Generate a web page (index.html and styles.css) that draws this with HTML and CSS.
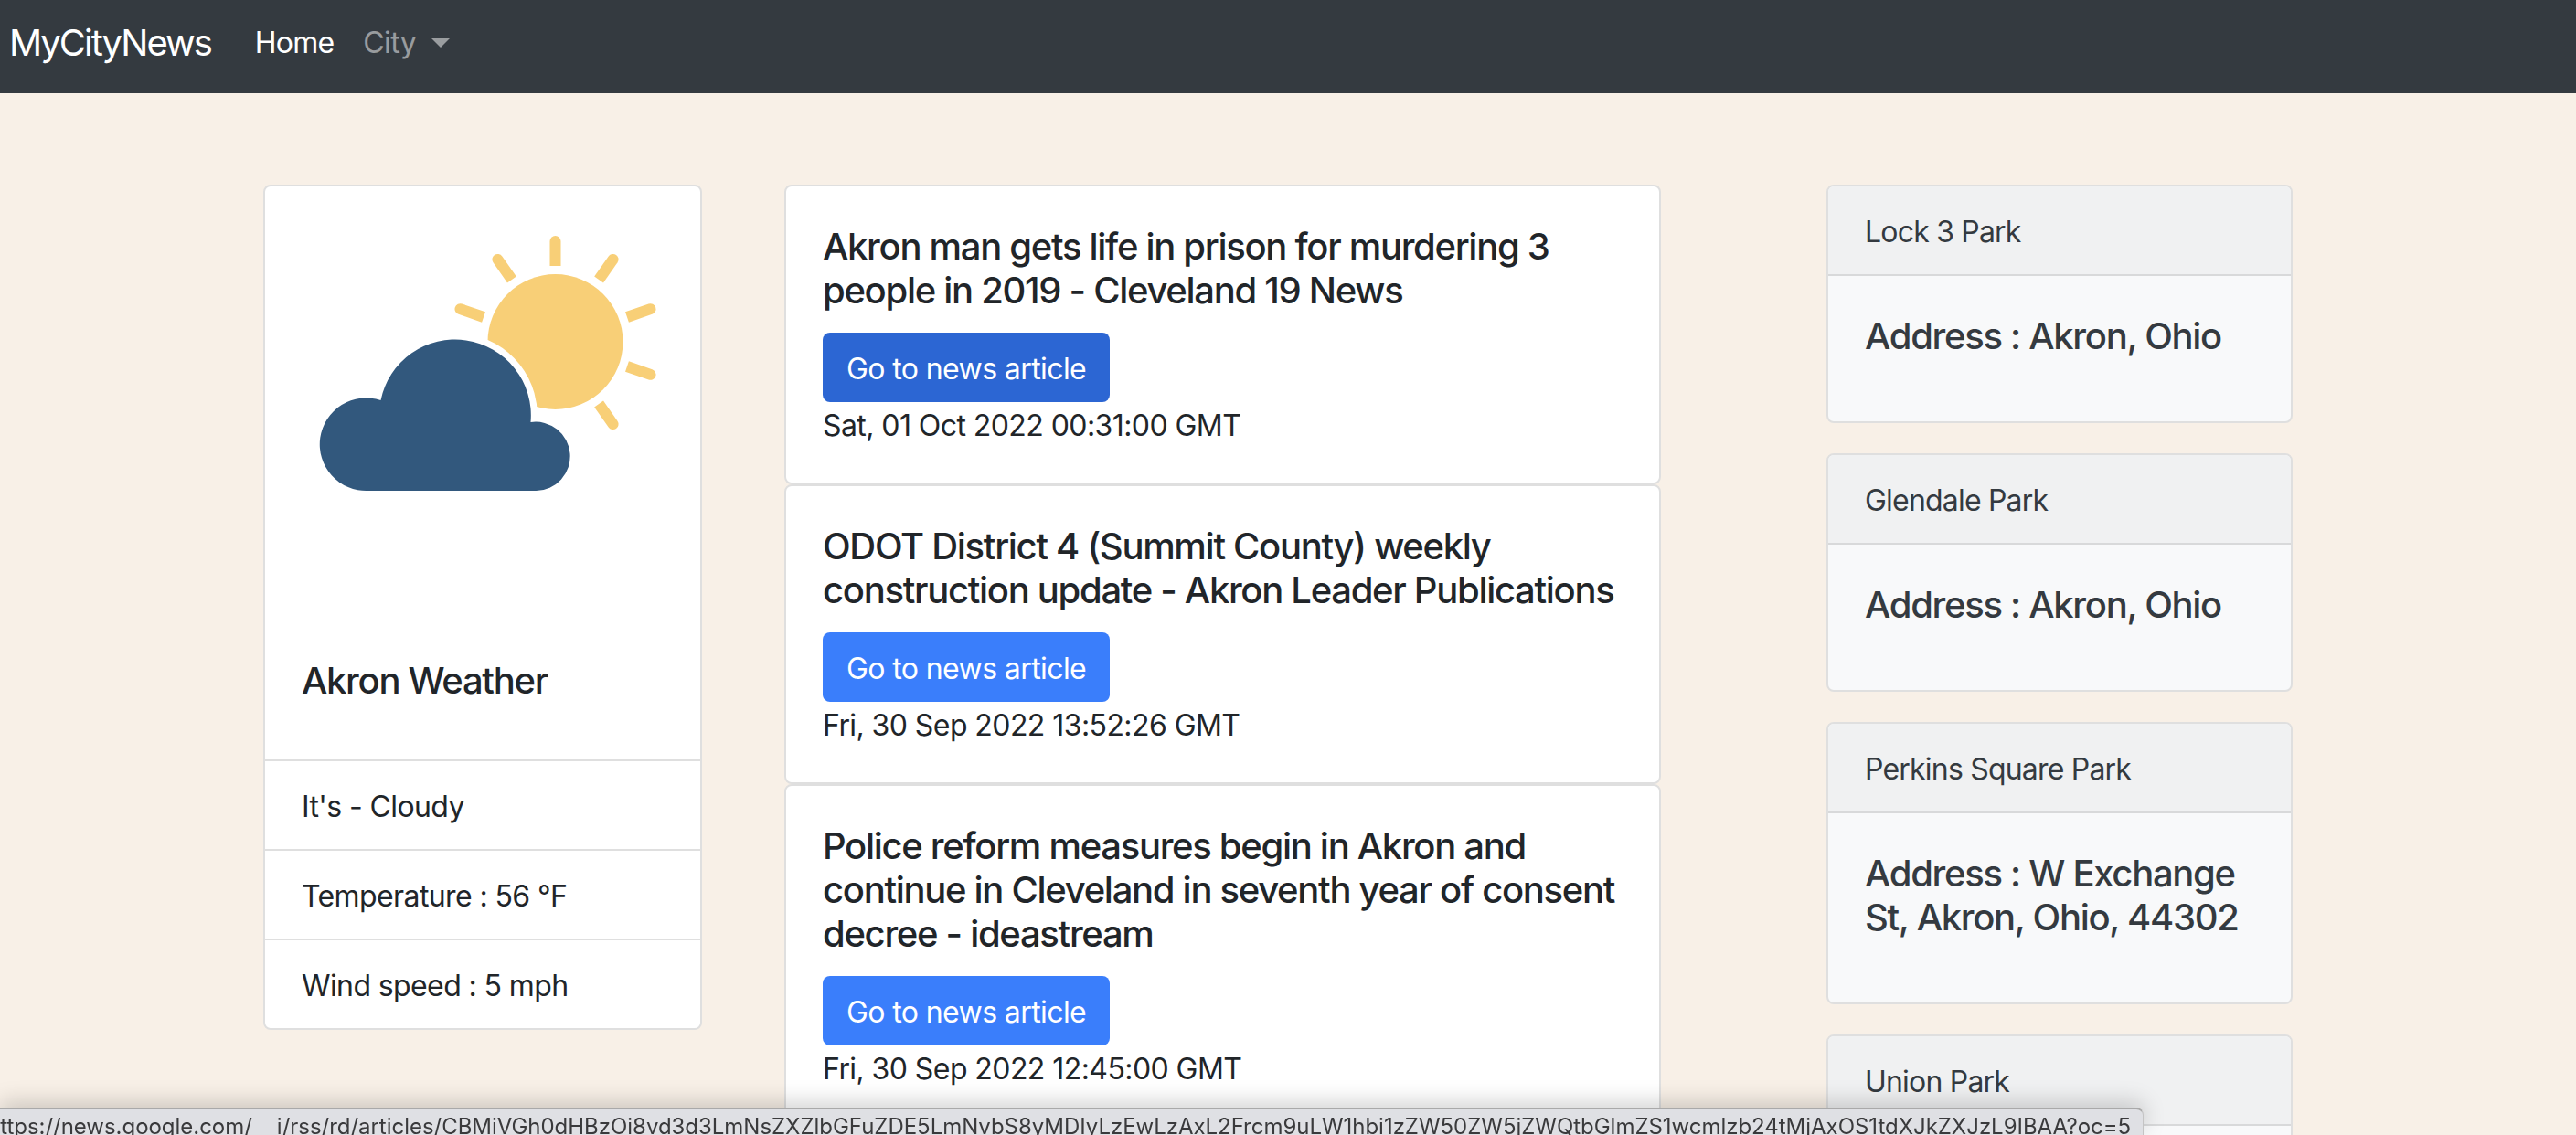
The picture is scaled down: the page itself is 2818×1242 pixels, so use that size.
FILE: index.html
```html
<!DOCTYPE html>
<html lang="en">
<head>
    <meta charset="UTF-8">
    <meta name="viewport" content="width=device-width, initial-scale=1.0">
    <title>MyCityNews</title>
    <link rel="stylesheet" href="styles.css">
</head>
<body>

<nav class="navbar">
    <a class="brand" href="#">MyCityNews</a>
    <a class="nav-link active" href="#">Home</a>
    <a class="nav-link" href="#">City <span class="caret"></span></a>
</nav>

<div class="page">
    <div class="weather-col">
        <div class="card">
            <svg class="weather-img" viewBox="290 205 475 475">
                <defs>
                    <path id="ray" d="M601 292V265A6 6 0 0 1 613 265V292Z"/>
                </defs>
                <circle cx="607" cy="375" r="74" fill="#f8cf77"/>
                <g fill="#f8cf77">
                    <use href="#ray"/>
                    <use href="#ray" transform="rotate(-35 607 375)"/>
                    <use href="#ray" transform="rotate(35 607 375)"/>
                    <use href="#ray" transform="rotate(-71 607 375)"/>
                    <use href="#ray" transform="rotate(71 607 375)"/>
                    <use href="#ray" transform="rotate(109 607 375)"/>
                    <use href="#ray" transform="rotate(145 607 375)"/>
                </g>
                <path class="cloud" d="M402 538A50.8 50.8 0 1 1 416 439A83 83 0 0 1 580 463A37.7 37.7 0 1 1 586 538Z"/>
            </svg>
            <div class="card-body">
                <h5 class="card-title">Akron Weather</h5>
            </div>
            <ul class="list-group">
                <li>It's - Cloudy</li>
                <li>Temperature : 56 °F</li>
                <li>Wind speed : 5 mph</li>
            </ul>
        </div>
    </div>

    <div class="news-col">
        <div class="card">
            <div class="card-body">
                <h5 class="card-title">Akron man gets life in prison for murdering 3 people in 2019 - Cleveland 19 News</h5>
                <a class="btn btn-hover" href="#">Go to news article</a>
                <div class="news-date">Sat, 01 Oct 2022 00:31:00 GMT</div>
            </div>
        </div>
        <div class="card">
            <div class="card-body">
                <h5 class="card-title">ODOT District 4 (Summit County) weekly construction update - Akron Leader Publications</h5>
                <a class="btn" href="#">Go to news article</a>
                <div class="news-date">Fri, 30 Sep 2022 13:52:26 GMT</div>
            </div>
        </div>
        <div class="card">
            <div class="card-body">
                <h5 class="card-title">Police reform measures begin in Akron and continue in Cleveland in seventh year of consent decree - ideastream</h5>
                <a class="btn" href="#">Go to news article</a>
                <div class="news-date">Fri, 30 Sep 2022 12:45:00 GMT</div>
            </div>
        </div>
    </div>

    <div class="parks-col">
        <div class="park">
            <div class="park-header">Lock 3 Park</div>
            <div class="park-body"><h5>Address : Akron, Ohio</h5></div>
        </div>
        <div class="park">
            <div class="park-header">Glendale Park</div>
            <div class="park-body"><h5>Address : Akron, Ohio</h5></div>
        </div>
        <div class="park">
            <div class="park-header">Perkins Square Park</div>
            <div class="park-body"><h5>Address : W Exchange St, Akron, Ohio, 44302</h5></div>
        </div>
        <div class="park">
            <div class="park-header">Union Park</div>
            <div class="park-body"><h5>Address : Akron, Ohio</h5></div>
        </div>
    </div>
</div>

<div class="status-bubble"><span class="status-host">https://news.google.com/</span><span class="status-path">i/rss/rd/articles/CBMiVGh0dHBzOi8vd3d3LmNsZXZlbGFuZDE5LmNvbS8yMDIyLzEwLzAxL2Frcm9uLW1hbi1zZW50ZW5jZWQtbGlmZS1wcmlzb24tMjAxOS1tdXJkZXJzL9IBAA?oc=5</span></div>

</body>
</html>
```

FILE: styles.css
```css
html, body {
    height: 100%;
}
body {
    margin: 0;
    height: 1242px;
    overflow: hidden;
    background-color: #f8f0e7;
    color: #212529;
    font-family: Inter, "Liberation Sans", sans-serif;
    font-size: 32px;
    line-height: 48px;
    letter-spacing: -0.6px;
}
a {
    text-decoration: none;
}

.navbar {
    display: flex;
    align-items: center;
    height: 102px;
    padding: 0 0 8px 10px;
    box-sizing: border-box;
    background-color: #343a40;
}
.brand {
    margin-right: 32px;
    color: #fff;
    font-size: 40px;
    letter-spacing: -2px;
}
.nav-link {
    padding: 0 16px;
    color: rgba(255, 255, 255, 0.5);
}
.nav-link.active {
    color: #fff;
    letter-spacing: -0.8px;
}
.caret {
    display: inline-block;
    margin-left: 8px;
    vertical-align: 6px;
    border-top: 10px solid rgba(255, 255, 255, 0.5);
    border-left: 10px solid transparent;
    border-right: 10px solid transparent;
}

.page {
    display: flex;
    align-items: flex-start;
    padding: 100px 0 0 288px;
}
.weather-col {
    width: 480px;
    margin-right: 90px;
}
.news-col {
    width: 959px;
    margin-right: 181px;
}
.parks-col {
    width: 510px;
}

.card {
    background-color: #fff;
    border: 2px solid #dfdfdf;
    border-radius: 8px;
}
.weather-img {
    display: block;
    width: 476px;
    height: 475px;
}
.card-body {
    padding: 42px 40px 40px;
}
.news-col .card-body {
    padding-bottom: 38px;
}
.card-title, .park-body h5 {
    margin: 0 0 22px;
    font-size: 40px;
    line-height: 48px;
    font-weight: 500;
    letter-spacing: -1.3px;
}
.news-date {
    padding-top: 2px;
    letter-spacing: -0.57px;
}
.cloud {
    fill: #32587d;
    stroke: #fff;
    stroke-width: 14px;
    paint-order: stroke;
}

.list-group {
    list-style: none;
    margin: 0;
    padding: 0;
}
.list-group li {
    padding: 26px 40px 22px;
    border-top: 2px solid #dfdfdf;
}

.btn {
    display: inline-block;
    padding: 14px 24px 10px;
    border: 2px solid transparent;
    border-radius: 8px;
    background-color: #3a7efb;
    color: #fff;
    vertical-align: top;
}
.btn-hover {
    background-color: #2c66d3;
}

.park {
    margin-bottom: 33px;
    background-color: #f8f9fa;
    border: 2px solid #dfdfdf;
    border-radius: 8px;
    color: #343a40;
}
.park-header {
    padding: 26px 40px 22px;
    background-color: #f0f1f2;
    border-bottom: 2px solid #d8d9da;
    border-radius: 6px 6px 0 0;
    letter-spacing: -0.8px;
}
.park-body {
    padding: 42px 40px 40px;
}
.park-body h5 {
    margin-bottom: 29px;
}

.status-bubble {
    position: fixed;
    left: 0;
    bottom: 0;
    width: 2345px;
    height: 30px;
    overflow: hidden;
    box-sizing: border-box;
    border-top: 2px solid #a9a9a9;
    border-right: 1px solid #c4c4c4;
    border-top-right-radius: 8px;
    background-color: #dfe0e4;
    box-shadow: 0 -6px 24px rgba(0, 0, 0, 0.18);
    color: #3a3a3c;
    font-size: 24px;
    line-height: 38px;
    letter-spacing: -0.03px;
    white-space: nowrap;
}
.status-host {
    margin-left: -14px;
}
.status-path {
    margin-left: 27px;
}
```
